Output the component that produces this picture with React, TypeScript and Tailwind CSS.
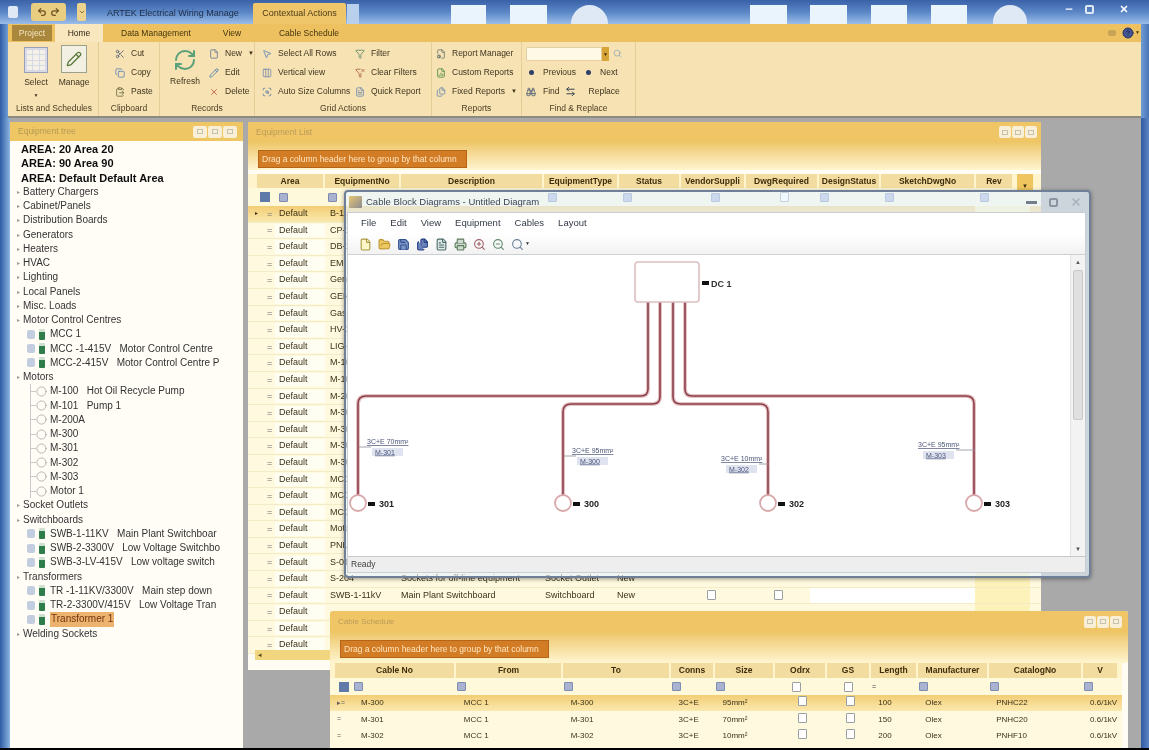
import React from "react";
import { Scissors, Copy, ClipboardPaste, RefreshCw, File, Pencil, X, MousePointer2, Columns3, ScanSearch, Filter, FilterX, FileText, FileCog, FileChartColumn, Files, Search, Binoculars, ArrowLeftRight, Save, FolderOpen, Printer, ZoomIn, ZoomOut, ChevronDown, Undo2, Redo2, Circle, Minus, HelpCircle } from "lucide-react";

const tree = [
  { t: "AREA: 20 Area 20", k: "a" }, { t: "AREA: 90 Area 90", k: "a" }, { t: "AREA: Default Default Area", k: "a" },
  { t: "Battery Chargers", k: "g" }, { t: "Cabinet/Panels", k: "g" }, { t: "Distribution Boards", k: "g" }, { t: "Generators", k: "g" }, { t: "Heaters", k: "g" }, { t: "HVAC", k: "g" }, { t: "Lighting", k: "g" }, { t: "Local Panels", k: "g" }, { t: "Misc. Loads", k: "g" }, { t: "Motor Control Centres", k: "g" },
  { t: "MCC 1", k: "p" }, { t: "MCC -1-415V   Motor Control Centre", k: "p" }, { t: "MCC-2-415V   Motor Control Centre P", k: "p" },
  { t: "Motors", k: "g" },
  { t: "M-100   Hot Oil Recycle Pump", k: "m" }, { t: "M-101   Pump 1", k: "m" }, { t: "M-200A", k: "m" }, { t: "M-300", k: "m" }, { t: "M-301", k: "m" }, { t: "M-302", k: "m" }, { t: "M-303", k: "m" }, { t: "Motor 1", k: "m" },
  { t: "Socket Outlets", k: "g" }, { t: "Switchboards", k: "g" },
  { t: "SWB-1-11KV   Main Plant Switchboar", k: "p" }, { t: "SWB-2-3300V   Low Voltage Switchbo", k: "p" }, { t: "SWB-3-LV-415V   Low voltage switch", k: "p" },
  { t: "Transformers", k: "g" },
  { t: "TR -1-11KV/3300V   Main step down", k: "p" }, { t: "TR-2-3300V/415V   Low Voltage Tran", k: "p" }, { t: "Transformer 1", k: "s" },
  { t: "Welding Sockets", k: "g" },
];

const eqNos = ["B-1", "CP-1", "DB-1", "EM-1", "Gen-1", "GEN-2", "Gas-1", "HV-1", "LIG-1", "M-100", "M-101", "M-200A", "M-300", "M-301", "M-302", "M-303", "MCC 1", "MCC-1", "MCC-2", "Motor 1", "PNL-1", "S-01", "S-204", "SWB-1-11kV"];
const eqCols = ["Area", "EquipmentNo", "Description", "EquipmentType", "Status", "VendorSuppli", "DwgRequired", "DesignStatus", "SketchDwgNo", "Rev"];
const eqW = ["w-[68px]", "w-[76px]", "w-[143px]", "w-[75px]", "w-[62px]", "w-[65px]", "w-[73px]", "w-[62px]", "w-[95px]", "w-[38px]"];

const cbCols = ["Cable No", "From", "To", "Conns", "Size", "Odrx", "GS", "Length", "Manufacturer", "CatalogNo", "V"];
const cbW = ["w-[121px]", "w-[107px]", "w-[108px]", "w-[44px]", "w-[60px]", "w-[52px]", "w-[44px]", "w-[47px]", "w-[71px]", "w-[94px]", "w-[36px]"];
const cbRows = [
  ["M-300", "MCC 1", "M-300", "3C+E", "95mm²", "", "", "100", "Olex", "PNHC22", "0.6/1kV"],
  ["M-301", "MCC 1", "M-301", "3C+E", "70mm²", "", "", "150", "Olex", "PNHC20", "0.6/1kV"],
  ["M-302", "MCC 1", "M-302", "3C+E", "10mm²", "", "", "200", "Olex", "PNHF10", "0.6/1kV"],
];

function WinButtons({ small }: { small?: boolean }) {
  return (
    <div className="flex gap-[1px]">
      {[0, 1, 2].map((i) => (
        <div key={i} className={`${small ? "w-[12px]" : "w-[14px]"} h-[12px] rounded-[2px] bg-[#f8efd6] flex items-center justify-center`}>
          <div className="w-[6px] h-[5px] border border-[#c4c2b0]" />
        </div>
      ))}
    </div>
  );
}

function GroupBar({ h }: { h: string }) {
  return (
    <div className={`${h} shrink-0 bg-gradient-to-b from-[#eec667] to-[#fff5cf] pl-[10px] pt-[8px]`}>
      <div className="w-[209px] h-[18px] bg-[#d27d25] border border-[#b56515] text-[8.5px] leading-[16px] pl-[3px] text-[#ffe6c2] whitespace-nowrap overflow-hidden">
        Drag a column header here to group by that column
      </div>
    </div>
  );
}

const Filt = () => <span className="inline-block w-[9px] h-[9px] bg-[#a9b3cf] border border-[#7d8bb3] rounded-[1px]" />;
const Chk = () => <span className="inline-block w-[9px] h-[10px] bg-white border border-[#9aa0a0] rounded-[1px]" />;

function RibbonRow({ icon, label, caret }: { icon: React.ReactNode; label: string; caret?: boolean }) {
  return (
    <div className="flex items-center gap-[5px] h-[19px] whitespace-nowrap">
      <span className="w-[13px] flex justify-center shrink-0">{icon}</span>
      <span>{label}</span>
      {caret && <span className="text-[6px] ml-[1px]">▼</span>}
    </div>
  );
}

function Group({ w, label, children }: { w: string; label: string; children: React.ReactNode }) {
  return (
    <div className={`${w} shrink-0 flex flex-col border-r border-[#e6cd98] h-full`}>
      <div className="h-[60px] flex pt-[2px]">{children}</div>
      <div className="text-center text-[8.5px] leading-[12px] text-[#4a3c22]">{label}</div>
    </div>
  );
}

export default function App() {
  return (
    <div className="w-[1149px] h-[750px] overflow-hidden relative flex flex-col bg-[#a9a9a9] text-[#333] blur-[0.75px]" style={{ fontFamily: '"Liberation Sans", Arial, sans-serif' }}>
      {/* Title bar */}
      <div className="h-[24px] shrink-0 flex items-end bg-gradient-to-b from-[#3a62a8] via-[#5a86c6] to-[#9bbde8] relative">
        <div className="absolute left-[8px] top-[6px] w-[10px] h-[12px] bg-[#dfe8f5] rounded-[2px]" />
        <div className="ml-[31px] mb-[3px] w-[35px] h-[18px] rounded-[3px] bg-[#e9cd80] flex items-center justify-center gap-[3px]">
          <Undo2 size={10} color="#6e5526" strokeWidth={3} /><Redo2 size={10} color="#6e5526" strokeWidth={3} />
        </div>
        <div className="ml-[11px] mb-[3px] w-[9px] h-[18px] rounded-[2px] bg-[#ecd48e] flex items-center justify-center"><ChevronDown size={8} color="#5a4620" /></div>
        <div className="ml-[21px] mb-[4px] w-[146px] text-[9px] text-[#1d2c46] whitespace-nowrap">ARTEK Electrical Wiring Manage</div>
        <div className="w-[93px] h-[21px] bg-[#f0c66b] rounded-t-[2px] text-[9px] leading-[20px] text-center text-[#4a3a18]">Contextual Actions</div>
        <div className="w-[12px] h-[20px] ml-[1px] bg-[#b9d0ec]" />
        <div className="ml-[92px] w-[35px] h-[19px] bg-[#eaf4fd]" />
        <div className="ml-[24px] w-[37px] h-[19px] bg-[#eaf4fd]" />
        <div className="ml-[24px] w-[37px] h-[19px] bg-[#dfe9f5] rounded-t-full" />
        <div className="ml-[142px] w-[37px] h-[19px] bg-[#eaf4fd]" />
        <div className="ml-[23px] w-[37px] h-[19px] bg-[#eaf4fd]" />
        <div className="ml-[24px] w-[36px] h-[19px] bg-[#eaf4fd]" />
        <div className="ml-[24px] w-[36px] h-[19px] bg-[#eaf4fd]" />
        <div className="ml-[26px] w-[34px] h-[19px] bg-[#dfe9f5] rounded-t-full" />
        <div className="absolute right-[20px] top-[4px] flex items-center text-white gap-[11px]">
          <Minus size={10} strokeWidth={3} /><div className="w-[9px] h-[9px] border-2 border-[#dfe8f5] rounded-[2px]" /><X size={10} strokeWidth={4} className="ml-[14px]" />
        </div>
      </div>

      {/* Tabs + ribbon inside the blue window frame */}
      <div className="shrink-0 flex">
        <div className="w-[8px] bg-gradient-to-r from-[#2f5ba3] to-[#6f9dd6]" />
        <div className="flex-1 min-w-0 flex flex-col">
          <div className="h-[18px] shrink-0 bg-[#edc15f] flex items-center text-[8.5px] text-[#43340f]">
            <div className="ml-[4px] w-[40px] h-[16px] bg-[#a9873c] text-[#f3e5c0] text-center leading-[16px]">Project</div>
            <div className="ml-[3px] w-[48px] h-[18px] bg-[#f8e7bf] text-center leading-[18px] text-[#2e2614]">Home</div>
            <div className="ml-[18px] w-[70px] text-center whitespace-nowrap">Data Management</div>
            <div className="ml-[26px] w-[30px] text-center">View</div>
            <div className="ml-[27px] w-[70px] text-center whitespace-nowrap">Cable Schedule</div>
            <div className="ml-auto mr-[1px] flex items-center gap-[6px]">
              <span className="w-[8px] h-[6px] bg-[#c7a456] rounded-[2px]" />
              <HelpCircle size={12} color="#1f2f66" fill="#44558f" />
              <span className="text-[5px] -ml-[5px]">▼</span>
            </div>
          </div>

          <div className="h-[76px] shrink-0 bg-[#f6e2b2] border-b-2 border-[#8d8a80] flex pl-[2px] text-[8.5px] text-[#403420]">
            <Group w="w-[89px]" label="Lists and Schedules">
              <div className="w-[46px] flex flex-col items-center pt-[3px] pl-[6px]">
                <div className="w-[24px] h-[26px] bg-[#d8d9e6] border border-[#9aa0b8] grid grid-cols-3 grid-rows-4 gap-[1px] p-[2px]">
                  {Array.from({ length: 12 }).map((_, i) => <span key={i} className="bg-[#f4f1e8]" />)}
                </div>
                <div className="mt-[3px]">Select</div>
                <div className="text-[5px] mt-[3px]">▼</div>
              </div>
              <div className="w-[34px] flex flex-col items-center pt-[1px] pl-[2px]">
                <div className="w-[26px] h-[28px] bg-[#f2f0e2] border border-[#9aa28f] flex items-center justify-center"><Pencil size={16} color="#5c7a3a" /></div>
                <div className="mt-[3px]">Manage</div>
              </div>
            </Group>
            <Group w="w-[61px]" label="Clipboard">
              <div className="pl-[14px]">
                <RibbonRow icon={<Scissors size={10} color="#56637a" />} label="Cut" />
                <RibbonRow icon={<Copy size={10} color="#5f86b8" />} label="Copy" />
                <RibbonRow icon={<ClipboardPaste size={10} color="#6a6a45" />} label="Paste" />
              </div>
            </Group>
            <Group w="w-[95px]" label="Records">
              <div className="w-[47px] flex flex-col items-center pt-[4px] pl-[3px]">
                <RefreshCw size={24} color="#5aa07a" />
                <div className="mt-[3px]">Refresh</div>
              </div>
              <div>
                <RibbonRow icon={<File size={10} color="#6a7b95" />} label="New" caret />
                <RibbonRow icon={<Pencil size={10} color="#4f7fb0" />} label="Edit" />
                <RibbonRow icon={<X size={10} color="#b45b4c" />} label="Delete" />
              </div>
            </Group>
            <Group w="w-[177px]" label="Grid Actions">
              <div className="pl-[5px] w-[98px]">
                <RibbonRow icon={<MousePointer2 size={10} color="#5f86b8" />} label="Select All Rows" />
                <RibbonRow icon={<Columns3 size={10} color="#7a8cb0" />} label="Vertical view" />
                <RibbonRow icon={<ScanSearch size={10} color="#5f7fa8" />} label="Auto Size Columns" />
              </div>
              <div>
                <RibbonRow icon={<Filter size={10} color="#5c8a6a" />} label="Filter" />
                <RibbonRow icon={<FilterX size={10} color="#a7623f" />} label="Clear Filters" />
                <RibbonRow icon={<FileText size={10} color="#6d89b0" />} label="Quick Report" />
              </div>
            </Group>
            <Group w="w-[90px]" label="Reports">
              <div className="pl-[2px]">
                <RibbonRow icon={<FileCog size={10} color="#6d7a70" />} label="Report Manager" />
                <RibbonRow icon={<FileChartColumn size={10} color="#4f8a45" />} label="Custom Reports" />
                <RibbonRow icon={<Files size={10} color="#6d89b0" />} label="Fixed Reports" caret />
              </div>
            </Group>
            <Group w="w-[114px]" label="Find & Replace">
              <div className="pl-[4px] w-full">
                <div className="flex items-center h-[19px]">
                  <div className="w-[76px] h-[14px] bg-[#fff9e6] border border-[#e3cfa0] rounded-[1px]" />
                  <div className="w-[7px] h-[14px] bg-[#d9a436] text-[5px] text-center leading-[14px] text-[#3a2a10]">▼</div>
                  <Search size={9} color="#8fa5b8" className="ml-[4px]" />
                </div>
                <div className="flex items-center h-[19px] pl-[3px]">
                  <span className="w-[5px] h-[5px] rounded-full bg-[#2f3f6a]" /><span className="ml-[9px]">Previous</span>
                  <span className="w-[5px] h-[5px] rounded-full bg-[#2f3f6a] ml-[10px]" /><span className="ml-[9px]">Next</span>
                </div>
                <div className="flex items-center h-[19px]">
                  <Binoculars size={10} color="#4a5a70" /><span className="ml-[7px]">Find</span>
                  <ArrowLeftRight size={11} color="#26354f" className="ml-[5px]" /><span className="ml-[13px]">Replace</span>
                </div>
              </div>
            </Group>
          </div>
        </div>
        <div className="w-[8px] bg-gradient-to-r from-[#6f9dd6] to-[#4a74b4]" />
      </div>

      {/* Work area */}
      <div className="flex-1 min-h-0 flex">
        <div className="w-[10px] shrink-0 bg-gradient-to-r from-[#2f5ba3] to-[#8db6e2]" />

        {/* Tree panel */}
        <div className="w-[233px] shrink-0 mt-[4px] flex flex-col bg-[#fffdf6]">
          <div className="h-[19px] shrink-0 bg-[#eec664] flex items-center justify-between pl-[8px] pr-[6px] text-[8.5px] text-[#b69b55]">
            <span>Equipment tree</span>
            <WinButtons />
          </div>
          <div className="pt-[1px] text-[10px] leading-[14.25px]">
            {tree.map((n) => (
              <div key={n.t} className="h-[14.25px] flex items-center whitespace-pre overflow-hidden">
                {n.k === "a" && <span className="ml-[11px] font-bold text-[11px] text-[#0d0d0d]">{n.t}</span>}
                {n.k === "g" && (<><span className="ml-[7px] w-[6px] text-[6px] text-[#9a9a9a]">▸</span><span className="text-[#333]">{n.t}</span></>)}
                {(n.k === "p" || n.k === "s") && (
                  <>
                    <span className="ml-[17px] w-[8px] h-[9px] bg-[#c3cde0] rounded-[2px]" />
                    <span className="ml-[4px] w-[6px] h-[11px] bg-[#2f7d4a] rounded-[1px] border-t-[3px] border-[#cfe0d0]" />
                    <span className={`ml-[5px] ${n.k === "s" ? "bg-[#eeb26f] px-[1px] text-[#6e3610]" : "text-[#333]"}`}>{n.t}</span>
                  </>
                )}
                {n.k === "m" && (
                  <>
                    <span className="ml-[20px] w-[6px] h-full border-l border-[#c9c9c9] flex items-center"><span className="w-full h-[1px] bg-[#c9c9c9]" /></span>
                    <Circle size={11} color="#9a9a9a" strokeWidth={1.5} />
                    <span className="ml-[3px] text-[#333]">{n.t}</span>
                  </>
                )}
              </div>
            ))}
          </div>
        </div>

        {/* MDI canvas */}
        <div className="flex-1 relative">
          {/* Equipment list */}
          <div className="absolute left-[5px] top-[4px] w-[793px] h-[548px] bg-[#fffdf3] flex flex-col overflow-hidden">
            <div className="h-[20px] shrink-0 bg-[#efc566] flex items-center justify-between pl-[8px] pr-[4px] text-[8.5px] text-[#ba9c58]">
              <span>Equipment List</span>
              <WinButtons small />
            </div>
            <GroupBar h="h-[28px]" />
            <div className="h-[14px] mt-[4px] shrink-0 flex pl-[9px] text-[8.5px] font-bold text-[#3e2d0c] bg-[#fff4cc]">
              {eqCols.map((c, i) => (
                <div key={c} className={`${eqW[i]} bg-[#f3dc9f] border-r-2 border-[#fff4cc] text-center leading-[14px] overflow-hidden whitespace-nowrap`}>{c}</div>
              ))}
              <div className="relative ml-[3px] w-[16px] h-[18px] bg-[#eec55f] text-center text-[6px] leading-[24px]">▼</div>
            </div>
            <div className="h-[18px] shrink-0 flex items-center pl-[12px] bg-[#fff9dc]">
              <span className="w-[10px] h-[10px] bg-[#5f7aa8]" />
              <span className="ml-[9px] flex"><Filt /></span>
              <span className="ml-[40px] flex"><Filt /></span>
              <span className="ml-[211px] flex"><Filt /></span>
              <span className="ml-[66px] flex"><Filt /></span>
              <span className="ml-[79px] flex"><Filt /></span>
              <span className="ml-[60px] flex"><Chk /></span>
              <span className="ml-[31px] flex"><Filt /></span>
              <span className="ml-[56px] flex"><Filt /></span>
              <span className="ml-[86px] flex"><Filt /></span>
            </div>
            {Array.from({ length: 27 }).map((_, i) => (
              <div key={i} className={`h-[16.6px] shrink-0 flex items-center text-[9px] text-[#3c3218] border-b border-[#f2ecc8] ${i === 0 ? "bg-gradient-to-b from-[#f2cd74] to-[#fbe9ae]" : "bg-[#fff9df]"}`}>
                <span className="w-[10px] text-[6px] text-right">{i === 0 ? "▸" : ""}</span>
                <span className="w-[8px] ml-[9px] text-[9px] leading-[8px] text-[#6c6c6c]">=</span>
                <span className={`w-[50px] pl-[4px] ${i === 0 ? "" : "bg-[#fffef3]"}`}>Default</span>
                <span className="w-[76px] pl-[5px] whitespace-nowrap">{eqNos[i] || ""}</span>
                {i === 22 && (<><span className="w-[144px] whitespace-nowrap">Sockets for off-line equipment</span><span className="w-[72px] whitespace-nowrap">Socket Outlet</span><span className="w-[60px]">New</span></>)}
                {i === 23 && (
                  <>
                    <span className="w-[144px] whitespace-nowrap">Main Plant Switchboard</span>
                    <span className="w-[72px]">Switchboard</span>
                    <span className="w-[60px]">New</span>
                    <span className="ml-[30px] flex"><Chk /></span>
                    <span className="ml-[58px] flex"><Chk /></span>
                    <span className="ml-[27px] w-[165px] h-full bg-white" />
                  </>
                )}
                <span className="ml-auto mr-[11px] w-[55px] h-full bg-[#fdf2b9]" />
              </div>
            ))}
            <div className="absolute left-[7px] top-[528px] w-[775px] h-[10px] bg-[#f1d57f] text-[7px] pl-[3px] leading-[10px] text-[#5a4a1a]">◂</div>
          </div>

          {/* Cable block diagram window */}
          <div className="absolute left-[101px] top-[72px] w-[747px] h-[388px] rounded-[4px] border-2 border-[#6f7f97] bg-[#e4f2ff]/60 flex flex-col shadow-[0_1px_4px_rgba(0,0,0,0.4)] pl-[1px] pr-[3px] pb-[3px]">
            <div className="h-[20px] shrink-0 flex items-center text-[9.5px] text-[#3c4556] -ml-[1px] -mr-[3px] px-[5px] pl-[3px]">
              <span className="w-[13px] h-[12px] mr-[4px] bg-gradient-to-br from-[#e7c46f] to-[#8c8c8c] rounded-[1px]" />
              <span>Cable Block Diagrams - Untitled Diagram</span>
              <span className="ml-auto mr-[2px] flex items-center gap-[12px] text-[#737d8b]">
                <span className="w-[11px] h-[3px] bg-[#737d8b]" /><span className="w-[9px] h-[9px] border-2 border-[#8a939f] rounded-[2px]" /><X size={12} strokeWidth={3} color="#a7b0bc" />
              </span>
            </div>
            <div className="flex-1 min-h-0 bg-white flex flex-col border border-[#c9ced4]">
              <div className="h-[21px] shrink-0 flex items-center pl-[13px] gap-[14px] text-[9.5px] text-[#333946]">
                {["File", "Edit", "View", "Equipment", "Cables", "Layout"].map((m) => <span key={m}>{m}</span>)}
              </div>
              <div className="h-[21px] shrink-0 flex items-center pl-[11px] gap-[6px] border-b border-[#ccd0d4] bg-gradient-to-b from-[#ffffff] to-[#f2f2f2]">
                <File size={13} color="#a9983f" fill="#fdf6c8" />
                <FolderOpen size={13} color="#bf9430" fill="#ecc961" />
                <Save size={13} color="#2f4f8e" fill="#7d97c8" />
                <Files size={13} color="#263f86" fill="#6a82b8" />
                <FileText size={13} color="#4a6a6a" fill="#dfe9e4" />
                <Printer size={13} color="#5c7a5c" fill="#cfdccf" />
                <ZoomIn size={13} color="#a05f6a" />
                <ZoomOut size={13} color="#5f8a6a" />
                <Search size={13} color="#6a7f9a" />
                <span className="text-[5px] -ml-[5px]">▼</span>
              </div>
              <div className="flex-1 min-h-0 flex">
                <div className="flex-1 relative">
                  <svg viewBox="348 254 722 301" className="absolute inset-0 w-full h-full" style={{ fontFamily: '"Liberation Sans", Arial, sans-serif' }}>
                    {[
                      "M648 301 V388 Q648 395 641 395 H366 Q358 395 358 403 V494",
                      "M660 301 V396 Q660 403 652 403 H571 Q563 403 563 411 V494",
                      "M673 301 V396 Q673 403 681 403 H760 Q768 403 768 411 V494",
                      "M685 301 V388 Q685 395 692 395 H966 Q974 395 974 403 V494",
                    ].map((d) => (
                      <g key={d} fill="none">
                        <path d={d} stroke="#e6c3c5" strokeWidth="4" />
                        <path d={d} stroke="#8a3f4a" strokeWidth="1.6" />
                      </g>
                    ))}
                    <rect x="635" y="261" width="64" height="40" rx="3" fill="#fff" stroke="#ddbfc0" strokeWidth="1.6" />
                    {[
                      [358, "301"], [563, "300"], [768, "302"], [974, "303"],
                    ].map(([x, l]) => (
                      <g key={l as string}>
                        <circle cx={x as number} cy={502} r={8} fill="#fff" stroke="#d9a8aa" strokeWidth="1.8" />
                        <rect x={(x as number) + 10} y={501} width={7} height={4} fill="#111" />
                        <text x={(x as number) + 21} y={506} fontSize="9" fontWeight="700" fill="#222">{l}</text>
                      </g>
                    ))}
                    <rect x="702" y="280" width="7" height="4" fill="#111" />
                    <text x="711" y="285.5" fontSize="9" fontWeight="700" fill="#333">DC 1</text>
                    {[
                      [359, 444, 367, "3C+E 70mm²", "M-301"], [564, 453, 572, "3C+E 95mm²", "M-300"], [769, 461, 721, "3C+E 10mm²", "M-302"], [975, 447, 918, "3C+E 95mm²", "M-303"],
                    ].map(([x, y, tx, a, b]) => {
                      const left = (tx as number) < (x as number) - 10;
                      return (
                        <g key={b as string}>
                          <line x1={left ? (tx as number) + 38 : (x as number)} x2={left ? (x as number) : (tx as number) + 4} y1={(y as number) + 2} y2={(y as number) + 2} stroke="#8d8f9a" strokeWidth="0.8" />
                          <rect x={(tx as number) + 5} y={(y as number) + 3} width={31} height={8} fill="#dfe3f0" />
                          <text x={tx as number} y={(y as number) - 1} fontSize="7" fill="#4a5578" textDecoration="underline">{a}</text>
                          <text x={(tx as number) + 8} y={(y as number) + 9.5} fontSize="7" fill="#4a5578" textDecoration="underline">{b}</text>
                        </g>
                      );
                    })}
                  </svg>
                </div>
                <div className="w-[15px] shrink-0 bg-[#f3f3f3] flex flex-col items-center text-[6px] text-[#555] border-l border-[#e4e4e4] pt-[3px]">
                  <span>▲</span>
                  <div className="mt-[3px] w-[10px] h-[150px] bg-[#e0e0e0] rounded-[2px] border border-[#c8c8c8]" />
                  <span className="mt-auto pb-[2px]">▼</span>
                </div>
              </div>
              <div className="h-[16px] shrink-0 border-t border-[#c4c8cc] bg-[#eeeeee] text-[8.5px] leading-[15px] pl-[3px] text-[#3c3c3c]">Ready</div>
            </div>
          </div>

          {/* Cable schedule */}
          <div className="absolute left-[87px] top-[493px] w-[798px] h-[137px] bg-[#fffdf3] rounded-t-[3px] flex flex-col overflow-hidden">
            <div className="h-[21px] shrink-0 bg-[#efc566] flex items-center justify-between pl-[8px] pr-[6px] text-[8px] text-[#ba9c58]">
              <span>Cable Schedule</span>
              <WinButtons small />
            </div>
            <GroupBar h="h-[31px]" />
            <div className="h-[15px] shrink-0 flex pl-[5px] mr-[6px] text-[8.5px] font-bold text-[#3e2d0c] bg-[#fff4cc]">
              {cbCols.map((c, i) => (
                <div key={c} className={`${cbW[i]} bg-[#f3dc9f] border-r-2 border-[#fff4cc] text-center leading-[15px] overflow-hidden whitespace-nowrap`}>{c}</div>
              ))}
            </div>
            <div className="h-[17px] shrink-0 flex items-center pl-[9px] mr-[6px] bg-[#fff9dc]">
              <span className="w-[10px] h-[10px] bg-[#5f7aa8]" />
              {cbW.map((w, i) => (
                <span key={i} className={`${i === 0 ? "w-[103px]" : w} pl-[5px] flex`}>
                  {i === 7 ? <span className="text-[7px] leading-[9px]">=</span> : i === 5 || i === 6 ? <span className="ml-[16px] flex"><Chk /></span> : <Filt />}
                </span>
              ))}
            </div>
            {cbRows.map((r, ri) => (
              <div key={ri} className={`h-[16.4px] shrink-0 flex items-center mr-[6px] text-[8px] text-[#3c3218] whitespace-nowrap ${ri === 0 ? "bg-gradient-to-b from-[#f2cd74] to-[#fbe9ae]" : "bg-[#fff9df]"}`}>
                <span className="w-[27px] pl-[7px] text-[7px] text-[#5f5f5f]">{ri === 0 ? "▸=" : " ="}</span>
                {r.map((v, i) => (
                  <span key={i} className={`${i === 0 ? "w-[103px]" : cbW[i]} pl-[4px] overflow-hidden`}>
                    {i === 5 ? <span className="ml-[16px] inline-flex"><Chk /></span> : i === 6 ? <span className="ml-[12px] inline-flex"><Chk /></span> : v}
                  </span>
                ))}
              </div>
            ))}
            <div className="flex-1 mr-[6px] bg-[#fff9df]" />
          </div>
        </div>

        <div className="w-[8px] shrink-0 bg-gradient-to-r from-[#2f5ba3] to-[#5d86c4]" />
      </div>
      <div className="h-[2px] shrink-0 bg-black" />
    </div>
  );
}
